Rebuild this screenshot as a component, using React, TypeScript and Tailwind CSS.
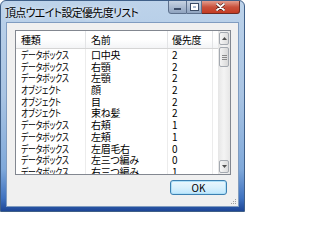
import React from "react";

// 頂点ウエイト設定優先度リスト — Vista style dialog

type Row = { kind: string; name: string; priority: number };

const rows: Row[] = [
  { kind: "データボックス", name: "口中央", priority: 2 },
  { kind: "データボックス", name: "右顎", priority: 2 },
  { kind: "データボックス", name: "左顎", priority: 2 },
  { kind: "オブジェクト", name: "顔", priority: 2 },
  { kind: "オブジェクト", name: "目", priority: 2 },
  { kind: "オブジェクト", name: "束ね髪", priority: 2 },
  { kind: "データボックス", name: "右頬", priority: 1 },
  { kind: "データボックス", name: "左頬", priority: 1 },
  { kind: "データボックス", name: "左眉毛右", priority: 0 },
  { kind: "データボックス", name: "左三つ編み", priority: 0 },
  { kind: "データボックス", name: "右三つ編み", priority: 1 },
];

function ScrollButton({ down }: { down?: boolean }) {
  return (
    <div className="h-[13px] mx-[1px] rounded-[2px] border border-[#a4a9b0] bg-gradient-to-r from-[#f6f6f6] to-[#dcdcdc] flex items-center justify-center">
      <svg width="5" height="3" viewBox="0 0 5 3" aria-hidden="true">
        {down ? <path d="M0 0h5L2.5 3z" fill="#505050" /> : <path d="M0 3h5L2.5 0z" fill="#505050" />}
      </svg>
    </div>
  );
}

function ScrollBar() {
  return (
    <div className="w-[12px] flex flex-col bg-gradient-to-r from-[#e6e6e6] via-[#f4f4f4] to-[#e6e6e6] py-[1px]">
      <ScrollButton />
      <div className="h-[20px] mt-[2px] mx-[1px] rounded-[2px] border border-[#a4a9b0] bg-gradient-to-r from-[#f4f4f4] to-[#d8d8d8] flex flex-col items-center justify-center gap-[1px]">
        <div className="w-[5px] h-px bg-[#8a8a8a]" />
        <div className="w-[5px] h-px bg-[#8a8a8a]" />
        <div className="w-[5px] h-px bg-[#8a8a8a]" />
      </div>
      <div className="flex-1" />
      <ScrollButton down />
    </div>
  );
}

export default function App() {
  return (
    <div className="w-[245px] h-[212px] flex flex-col rounded-t-[6px] border border-[#3f5f88] bg-[linear-gradient(to_bottom,#bdd3ea_0%,#a9c4e3_45%,#80a9da_80%,#3f72c0_94%,#1d4696_100%)] font-['Noto_Sans_CJK_JP',sans-serif] [font-feature-settings:'palt'] text-black overflow-hidden">
      {/* Title bar */}
      <div className="h-[21px] flex items-start">
        <div className="pl-[4px] pt-[4px] text-[11px] leading-[14px] tracking-[-0.7px] [text-shadow:0_0_4px_#ffffff]">
          頂点ウエイト設定優先度リスト
        </div>
        <div className="ml-auto mr-[4px] flex h-[14px] -mt-px">
          <div className="w-[19px] rounded-bl-[3px] border border-[#5d708c] bg-gradient-to-b from-[#c7d3e2] to-[#8fa3bf] flex items-end justify-center pb-[3px]">
            <div className="w-[7px] h-[2px] bg-white border-[0.5px] border-[#3c4c66]" />
          </div>
          <div className="w-[15px] border-y border-r border-[#5d708c] bg-gradient-to-b from-[#c7d3e2] to-[#8fa3bf] flex items-center justify-center">
            <div className="w-[7px] h-[6px] border-2 border-white outline outline-[0.5px] outline-[#3c4c66]" />
          </div>
          <div className="w-[38px] rounded-br-[3px] border-y border-r border-[#6e2a22] bg-gradient-to-b from-[#e29c8e] via-[#c9513c] to-[#c43b22] flex items-center justify-center">
            <svg width="9" height="8" viewBox="0 0 9 8" aria-hidden="true">
              <path d="M1 1l7 6M8 1L1 7" stroke="#4a1a14" strokeWidth="3" strokeLinecap="round" />
              <path d="M1 1l7 6M8 1L1 7" stroke="#ffffff" strokeWidth="1.8" strokeLinecap="round" />
            </svg>
          </div>
        </div>
      </div>

      {/* Client area */}
      <div className="flex-1 flex px-[5px] pb-[4px]">
        <div className="flex-1 flex flex-col bg-[#f0f0f0] border border-[#809cc0] relative">
          <div className="mt-[7px] ml-[8px] w-[216px] h-[145px] border border-[#828790] bg-white flex text-[10px] tracking-[-0.3px]">
            <div className="flex-1 flex flex-col overflow-hidden">
              {/* Header */}
              <div className="h-[18px] flex shrink-0 border-b border-[#d5d5d5] bg-gradient-to-b from-white via-white to-[#f3f4f6]">
                <div className="w-[70px] pl-[5px] flex items-center border-r border-[#e3e4e6]">種類</div>
                <div className="w-[82px] pl-[5px] flex items-center border-r border-[#e3e4e6]">名前</div>
                <div className="w-[45px] pl-[4px] flex items-center border-r border-[#e3e4e6]">優先度</div>
                <div className="flex-1" />
              </div>
              {/* Rows */}
              {rows.map((r, i) => (
                <div key={i} className="h-[11.7px] shrink-0 flex leading-[11.7px] whitespace-nowrap">
                  <div className="w-[70px] pl-[5px] border-r border-[#ececec]">
                    <span className="inline-block origin-left scale-x-[0.78]">{r.kind}</span>
                  </div>
                  <div className="w-[82px] pl-[5px] border-r border-[#ececec]">{r.name}</div>
                  <div className="w-[45px] pl-[4px] border-r border-[#ececec]">{r.priority}</div>
                  <div className="flex-1" />
                </div>
              ))}
            </div>
            <ScrollBar />
          </div>

          <div className="flex justify-end pr-[11px] mt-[5px]">
            <button className="w-[57px] h-[15px] rounded-[3px] border border-[#3c7fb1] bg-gradient-to-b from-[#eaf6fd] via-[#d9f0fc] to-[#bee6fd] shadow-[inset_0_0_0_1px_#aee0f8] text-[10px] leading-[13px] text-black">
              OK
            </button>
          </div>

          {/* size grip */}
          <svg className="absolute right-[1px] bottom-[1px]" width="7" height="7" viewBox="0 0 7 7" aria-hidden="true">
            <rect x="5" y="1" width="1" height="1" fill="#a0a0a0" />
            <rect x="3" y="3" width="1" height="1" fill="#a0a0a0" />
            <rect x="5" y="3" width="1" height="1" fill="#a0a0a0" />
            <rect x="1" y="5" width="1" height="1" fill="#a0a0a0" />
            <rect x="3" y="5" width="1" height="1" fill="#a0a0a0" />
            <rect x="5" y="5" width="1" height="1" fill="#a0a0a0" />
          </svg>
        </div>
      </div>
    </div>
  );
}
